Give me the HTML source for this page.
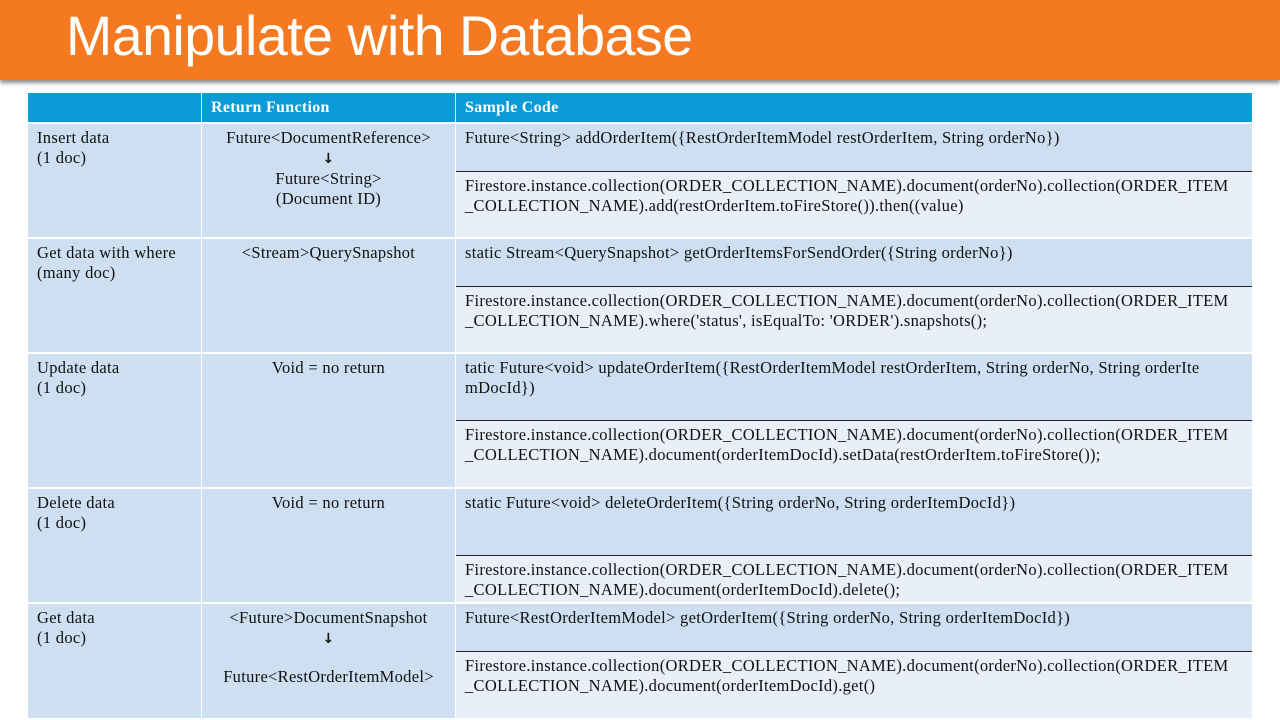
<!DOCTYPE html>
<html><head><meta charset="utf-8"><style>
*{margin:0;padding:0;box-sizing:border-box}
body{width:1280px;height:720px;background:#fff;position:relative;overflow:hidden;font-family:"Liberation Serif",serif;font-size:16.5px;letter-spacing:0.3px;color:#111}
.title{position:absolute;left:0;top:0;width:1280px;height:80px;background:#f47920;box-shadow:0 3px 4px rgba(0,0,0,.45)}
.title span{position:absolute;left:66px;top:4px;font-family:"Liberation Sans",sans-serif;font-size:55.5px;color:#fff;letter-spacing:-0.5px}
.c{position:absolute;line-height:20px;padding:4px 9px 0 9px;white-space:nowrap}
.h{background:#0a9ad6;color:#fff;font-weight:bold;padding-top:5px;font-size:16px}
.d{background:#cddff0}
.l{background:#e8eff8}
.ctr{text-align:center}
.ln{position:absolute;left:456px;width:796px;height:1px;background:#222}
.ar{font-family:"DejaVu Sans";font-size:14px;font-weight:bold}
</style></head><body>
<div class="title"><span>Manipulate with Database</span></div>

<div class="c h" style="left:28px;top:93px;width:173px;height:29px"></div>
<div class="c h" style="left:202px;top:93px;width:253px;height:29px">Return Function</div>
<div class="c h" style="left:456px;top:93px;width:796px;height:29px">Sample Code</div>

<div class="c d" style="left:28px;top:124px;width:173px;height:113px">Insert data<br>(1 doc)</div>
<div class="c d ctr" style="left:202px;top:124px;width:253px;height:113px">Future&lt;DocumentReference&gt;<br><span class="ar">↓</span><br>Future&lt;String&gt;<br>(Document ID)</div>
<div class="c d" style="left:456px;top:124px;width:796px;height:47px">Future&lt;String&gt; addOrderItem({RestOrderItemModel restOrderItem, String orderNo})</div>
<div class="ln" style="top:171px"></div>
<div class="c l" style="left:456px;top:172px;width:796px;height:65px">Firestore.instance.collection(ORDER_COLLECTION_NAME).document(orderNo).collection(ORDER_ITEM<br>_COLLECTION_NAME).add(restOrderItem.toFireStore()).then((value)</div>

<div class="c d" style="left:28px;top:239px;width:173px;height:113px">Get data with where<br>(many doc)</div>
<div class="c d ctr" style="left:202px;top:239px;width:253px;height:113px">&lt;Stream&gt;QuerySnapshot</div>
<div class="c d" style="left:456px;top:239px;width:796px;height:47px">static Stream&lt;QuerySnapshot&gt; getOrderItemsForSendOrder({String orderNo})</div>
<div class="ln" style="top:286px"></div>
<div class="c l" style="left:456px;top:287px;width:796px;height:65px">Firestore.instance.collection(ORDER_COLLECTION_NAME).document(orderNo).collection(ORDER_ITEM<br>_COLLECTION_NAME).where('status', isEqualTo: 'ORDER').snapshots();</div>

<div class="c d" style="left:28px;top:354px;width:173px;height:133px">Update data<br>(1 doc)</div>
<div class="c d ctr" style="left:202px;top:354px;width:253px;height:133px">Void = no return</div>
<div class="c d" style="left:456px;top:354px;width:796px;height:66px">tatic Future&lt;void&gt; updateOrderItem({RestOrderItemModel restOrderItem, String orderNo, String orderIte<br>mDocId})</div>
<div class="ln" style="top:420px"></div>
<div class="c l" style="left:456px;top:421px;width:796px;height:66px">Firestore.instance.collection(ORDER_COLLECTION_NAME).document(orderNo).collection(ORDER_ITEM<br>_COLLECTION_NAME).document(orderItemDocId).setData(restOrderItem.toFireStore());</div>

<div class="c d" style="left:28px;top:489px;width:173px;height:113px">Delete data<br>(1 doc)</div>
<div class="c d ctr" style="left:202px;top:489px;width:253px;height:113px">Void = no return</div>
<div class="c d" style="left:456px;top:489px;width:796px;height:66px">static Future&lt;void&gt; deleteOrderItem({String orderNo, String orderItemDocId})</div>
<div class="ln" style="top:555px"></div>
<div class="c l" style="left:456px;top:556px;width:796px;height:46px">Firestore.instance.collection(ORDER_COLLECTION_NAME).document(orderNo).collection(ORDER_ITEM<br>_COLLECTION_NAME).document(orderItemDocId).delete();</div>

<div class="c d" style="left:28px;top:604px;width:173px;height:114px">Get data<br>(1 doc)</div>
<div class="c d ctr" style="left:202px;top:604px;width:253px;height:114px">&lt;Future&gt;DocumentSnapshot<br><span class="ar">↓</span><br><span style="display:inline-block;margin-top:18px">Future&lt;RestOrderItemModel&gt;</span></div>
<div class="c d" style="left:456px;top:604px;width:796px;height:47px">Future&lt;RestOrderItemModel&gt; getOrderItem({String orderNo, String orderItemDocId})</div>
<div class="ln" style="top:651px"></div>
<div class="c l" style="left:456px;top:652px;width:796px;height:66px">Firestore.instance.collection(ORDER_COLLECTION_NAME).document(orderNo).collection(ORDER_ITEM<br>_COLLECTION_NAME).document(orderItemDocId).get()</div>
</body></html>
